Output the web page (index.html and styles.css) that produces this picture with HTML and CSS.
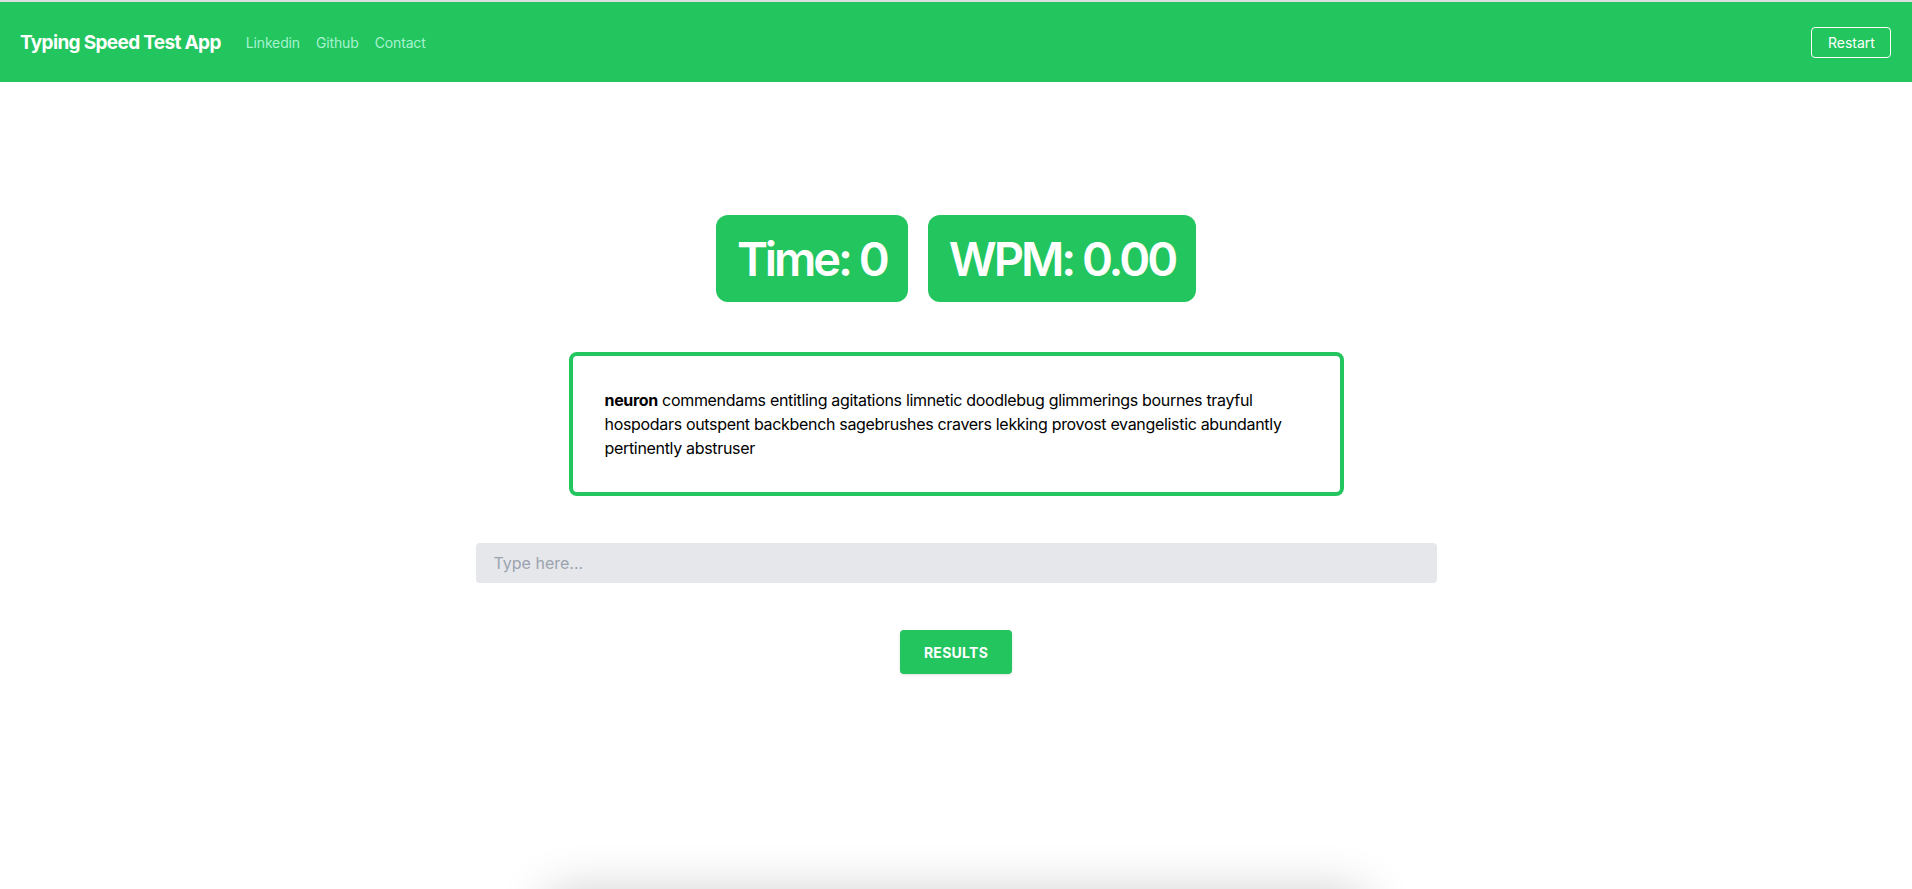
FILE: index.html
```html
<!DOCTYPE html>
<html lang="en">
<head>
<meta charset="utf-8">
<title>Typing Speed Test App</title>
<link rel="stylesheet" href="styles.css">
</head>
<body>
<nav class="navbar">
  <div class="nav-left">
    <span class="brand">Typing Speed Test App</span>
    <a class="nav-link" href="#">Linkedin</a>
    <a class="nav-link" href="#">Github</a>
    <a class="nav-link" href="#">Contact</a>
  </div>
  <button class="restart-btn">Restart</button>
</nav>
<main class="main">
  <div class="stats">
    <div class="stat stat-time">Time: 0</div>
    <div class="stat stat-wpm">WPM: 0.00</div>
  </div>
  <div class="words"><p class="words-text"><b>neuron</b> commendams entitling agitations limnetic doodlebug glimmerings bournes trayful hospodars outspent backbench sagebrushes cravers lekking provost evangelistic abundantly pertinently abstruser</p></div>
  <input class="type-input" type="text" placeholder="Type here...">
  <button class="results-btn">Results</button>
  <div class="results-panel"></div>
</main>
</body>
</html>
```
FILE: styles.css
```css
* { box-sizing: border-box; }
html, body { height: 100%; overflow: hidden; }
body {
  margin: 0;
  background: #fff;
  font-family: Inter, "Noto Sans", sans-serif;
  border-top: 2px solid #dedede;
}
.navbar {
  height: 80px;
  background: #22c55e;
  display: flex;
  align-items: center;
  justify-content: space-between;
  padding: 0 21px 0 20px;
}
.nav-left { display: flex; align-items: center; }
.brand {
  color: #fff;
  font-size: 19px;
  font-weight: 700;
  letter-spacing: -0.035em;
  margin-right: 25px;
}
.nav-link {
  color: #a7f3d0;
  font-size: 14px;
  text-decoration: none;
  margin-right: 16px;
  letter-spacing: -0.01em;
}
.restart-btn {
  font-family: inherit;
  font-size: 14px;
  line-height: 14px;
  color: #fff;
  background: transparent;
  border: 1px solid #fff;
  border-radius: 4px;
  padding: 8px 16px;
  height: 31px;
  width: 80px;
}
.main {
  display: flex;
  flex-direction: column;
  align-items: center;
}
.stats {
  display: flex;
  gap: 20px;
  margin-top: 133px;
}
.stat {
  background: #22c55e;
  color: #fff;
  font-size: 47px;
  line-height: 47px;
  font-weight: 600;
  letter-spacing: -0.065em;
  padding: 20px 21px;
  border-radius: 12px;
  height: 87px;
}
.words {
  margin-top: 50px;
  width: 775px;
  border: 4px solid #22c55e;
  border-radius: 8px;
  padding: 32px;
}
.words-text {
  margin: 0;
  font-size: 16px;
  line-height: 24px;
  letter-spacing: -0.02em;
  color: #000;
}
.type-input {
  margin-top: 47px;
  width: 961px;
  height: 40px;
  border: none;
  border-radius: 4px;
  background: #e5e7eb;
  padding: 8px 18px;
  font-family: inherit;
  font-size: 16px;
  outline: none;
}
.type-input::placeholder { color: #9ca3af; }
.results-btn {
  margin-top: 47px;
  width: 112px;
  height: 44px;
  background: #22c55e;
  color: #fff;
  border: none;
  border-radius: 4px;
  font-family: inherit;
  font-size: 14px;
  font-weight: 700;
  text-transform: uppercase;
  letter-spacing: 0.02em;
  box-shadow: 0 1px 3px rgba(0,0,0,0.12);
}
.results-panel {
  margin-top: 230px;
  width: 800px;
  height: 300px;
  background: #fff;
  border-radius: 12px;
  box-shadow: 0 0 50px 12px rgba(0,0,0,0.2);
}
```
